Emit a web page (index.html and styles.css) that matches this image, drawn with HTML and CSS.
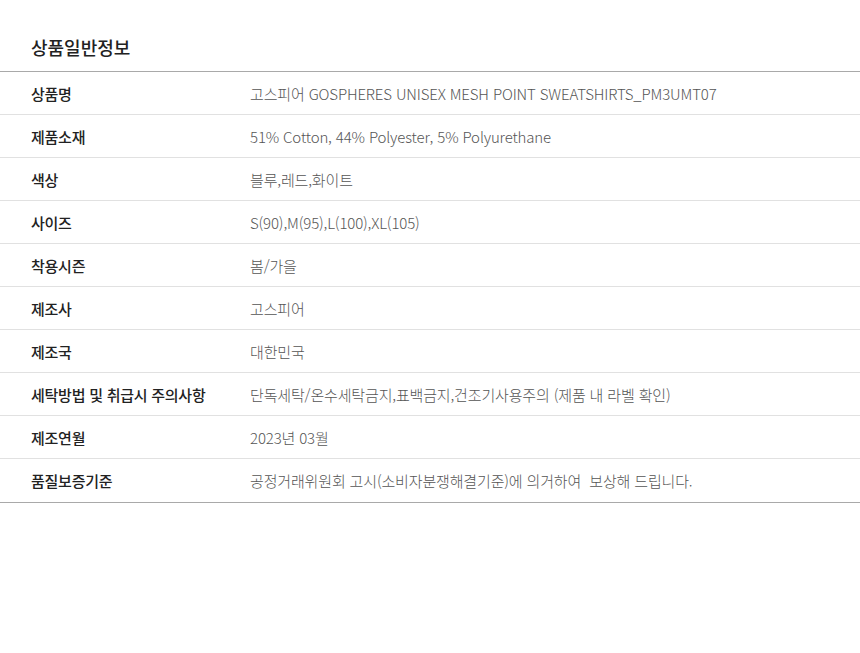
FILE: index.html
```html
<!DOCTYPE html>
<html lang="ko">
<head>
<meta charset="utf-8">
<link rel="stylesheet" href="styles.css">
</head>
<body>
<section class="info">
  <h2 class="info-title">상품일반정보</h2>
  <div class="info-table">
    <div class="row"><div class="label">상품명</div><div class="value">고스피어 GOSPHERES UNISEX MESH POINT SWEATSHIRTS_PM3UMT07</div></div>
    <div class="row"><div class="label">제품소재</div><div class="value">51% Cotton, 44% Polyester, 5% Polyurethane</div></div>
    <div class="row"><div class="label">색상</div><div class="value">블루,레드,화이트</div></div>
    <div class="row"><div class="label">사이즈</div><div class="value">S(90),M(95),L(100),XL(105)</div></div>
    <div class="row"><div class="label">착용시즌</div><div class="value">봄/가을</div></div>
    <div class="row"><div class="label">제조사</div><div class="value">고스피어</div></div>
    <div class="row"><div class="label">제조국</div><div class="value">대한민국</div></div>
    <div class="row"><div class="label">세탁방법 및 취급시 주의사항</div><div class="value">단독세탁/온수세탁금지,표백금지,건조기사용주의 (제품 내 라벨 확인)</div></div>
    <div class="row"><div class="label">제조연월</div><div class="value">2023년 03월</div></div>
    <div class="row"><div class="label">품질보증기준</div><div class="value">공정거래위원회 고시(소비자분쟁해결기준)에 의거하여&nbsp; 보상해 드립니다.</div></div>
  </div>
</section>
</body>
</html>
```
FILE: styles.css
```css
html, body {
  margin: 0;
  padding: 0;
  background: #fff;
}
body {
  font-family: "Noto Sans CJK KR", "Noto Sans", sans-serif;
  color: #222;
}
.info {
  width: 860px;
}
.info-title {
  margin: 0;
  padding: 34px 31px 11px;
  font-size: 18px;
  line-height: 26px;
  font-weight: 500;
  color: #222;
}
.info-table {
  border-top: 1px solid #a9a9a9;
  border-bottom: 1px solid #a9a9a9;
}
.row {
  display: flex;
  align-items: center;
  height: 42px;
  border-bottom: 1px solid #e1e1e1;
}
.row:last-child {
  border-bottom-color: transparent;
}
.label {
  width: 219px;
  padding-left: 31px;
  font-size: 15px;
  letter-spacing: -0.25px;
  font-weight: 500;
  color: #222;
}
.value {
  font-size: 15px;
  letter-spacing: -0.15px;
  font-weight: 300;
  color: #555;
}
```
